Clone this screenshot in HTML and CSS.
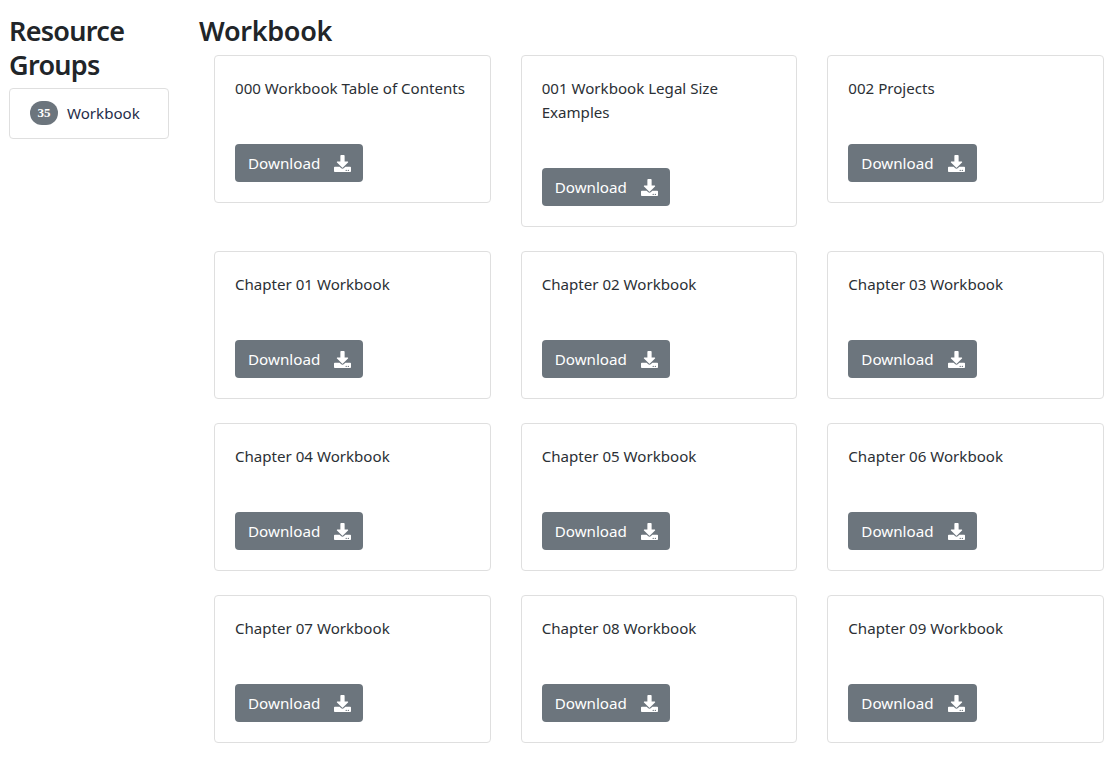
FILE: index.html
```html
<!DOCTYPE html><html lang="en">
<head>
  <meta charset="UTF-8">
  <meta name="viewport" content="width=device-width, initial-scale=1.0">
  <title>Resource Groups</title>
  <link rel="stylesheet" href="styles.css">
</head>
<body>
  <svg class="sprite" width="0" height="0">
    <symbol id="download" viewBox="0 0 512 512">
      <path fill="currentColor" d="M216 0h80c13.3 0 24 10.7 24 24v168h87.7c17.8 0 26.7 21.5 14.1 34.1L269.7 378.3c-7.5 7.5-19.8 7.5-27.3 0L90.1 226.1c-12.6-12.6-3.7-34.1 14.1-34.1H192V24c0-13.3 10.7-24 24-24zm296 376v112c0 13.3-10.7 24-24 24H24c-13.3 0-24-10.7-24-24V376c0-13.3 10.7-24 24-24h146.7l49 49c20.1 20.1 52.5 20.1 72.6 0l49-49H488c13.3 0 24 10.7 24 24zm-124 88c0-11-9-20-20-20s-20 9-20 20 9 20 20 20 20-9 20-20zm64 0c0-11-9-20-20-20s-20 9-20 20 9 20 20 20 20-9 20-20z"/>
    </symbol>
  </svg>
  <div class="page">
    <aside class="sidebar">
      <h2>Resource Groups</h2>
      <a class="group-item" href="#"><span class="badge">35</span>Workbook</a>
    </aside>
    <main class="content">
      <h2>Workbook</h2>
      <div class="cards">
        <div class="card">
          <p>000 Workbook Table of Contents</p>
          <a class="btn" href="#">Download<svg class="icon"><use href="#download"/></svg></a>
        </div>
        <div class="card">
          <p>001 Workbook Legal Size Examples</p>
          <a class="btn" href="#">Download<svg class="icon"><use href="#download"/></svg></a>
        </div>
        <div class="card">
          <p>002 Projects</p>
          <a class="btn" href="#">Download<svg class="icon"><use href="#download"/></svg></a>
        </div>
        <div class="card">
          <p>Chapter 01 Workbook</p>
          <a class="btn" href="#">Download<svg class="icon"><use href="#download"/></svg></a>
        </div>
        <div class="card">
          <p>Chapter 02 Workbook</p>
          <a class="btn" href="#">Download<svg class="icon"><use href="#download"/></svg></a>
        </div>
        <div class="card">
          <p>Chapter 03 Workbook</p>
          <a class="btn" href="#">Download<svg class="icon"><use href="#download"/></svg></a>
        </div>
        <div class="card">
          <p>Chapter 04 Workbook</p>
          <a class="btn" href="#">Download<svg class="icon"><use href="#download"/></svg></a>
        </div>
        <div class="card">
          <p>Chapter 05 Workbook</p>
          <a class="btn" href="#">Download<svg class="icon"><use href="#download"/></svg></a>
        </div>
        <div class="card">
          <p>Chapter 06 Workbook</p>
          <a class="btn" href="#">Download<svg class="icon"><use href="#download"/></svg></a>
        </div>
        <div class="card">
          <p>Chapter 07 Workbook</p>
          <a class="btn" href="#">Download<svg class="icon"><use href="#download"/></svg></a>
        </div>
        <div class="card">
          <p>Chapter 08 Workbook</p>
          <a class="btn" href="#">Download<svg class="icon"><use href="#download"/></svg></a>
        </div>
        <div class="card">
          <p>Chapter 09 Workbook</p>
          <a class="btn" href="#">Download<svg class="icon"><use href="#download"/></svg></a>
        </div>
      </div>
    </main>
  </div>
</body>
</html>
```

FILE: styles.css
```css
body {
  margin: 0;
  font-family: "Noto Sans", "Open Sans", sans-serif;
  font-size: 15.1px;
  line-height: 24px;
  color: #2b3035;
  background: #fff;
}
.sprite {
  display: block;
  height: 0;
}
.page {
  display: flex;
  gap: 30px;
  padding: 14px 14px 17px 9px;
}
h2 {
  margin: 0;
  font-size: 27px;
  font-weight: 600;
  line-height: 34px;
  letter-spacing: -0.3px;
  color: #212529;
}
.sidebar {
  flex: 0 0 160px;
}
.sidebar h2 {
  margin-bottom: 6px;
  letter-spacing: -0.7px;
}
.group-item {
  display: flex;
  align-items: center;
  padding: 12px 20px 13px;
  border: 1px solid #dfdfdf;
  border-radius: 4px;
  color: #1f2d4a;
  text-decoration: none;
}
.badge {
  width: 28px;
  height: 24px;
  margin-right: 9px;
  border-radius: 12px;
  background: #6c757d;
  color: #fff;
  font-family: "Liberation Serif", serif;
  font-size: 13px;
  font-weight: 700;
  line-height: 24px;
  text-align: center;
}
.content {
  flex: 1;
}
.content h2 {
  margin-bottom: 7px;
}
.cards {
  display: grid;
  grid-template-columns: repeat(3, 1fr);
  column-gap: 30px;
  row-gap: 24px;
  align-items: start;
  margin-left: 15px;
}
.card {
  padding: 20px;
  border: 1px solid #dfdfdf;
  border-radius: 4px;
}
.card p {
  margin: 0 0 44px;
}
.btn {
  display: inline-flex;
  align-items: center;
  height: 38px;
  box-sizing: border-box;
  padding: 0 12px 0 13px;
  border-radius: 4px;
  background: #6c757d;
  color: #fff;
  font-size: 15.2px;
  text-decoration: none;
}
.icon {
  width: 17px;
  height: 17px;
  margin-left: 14px;
}
```
